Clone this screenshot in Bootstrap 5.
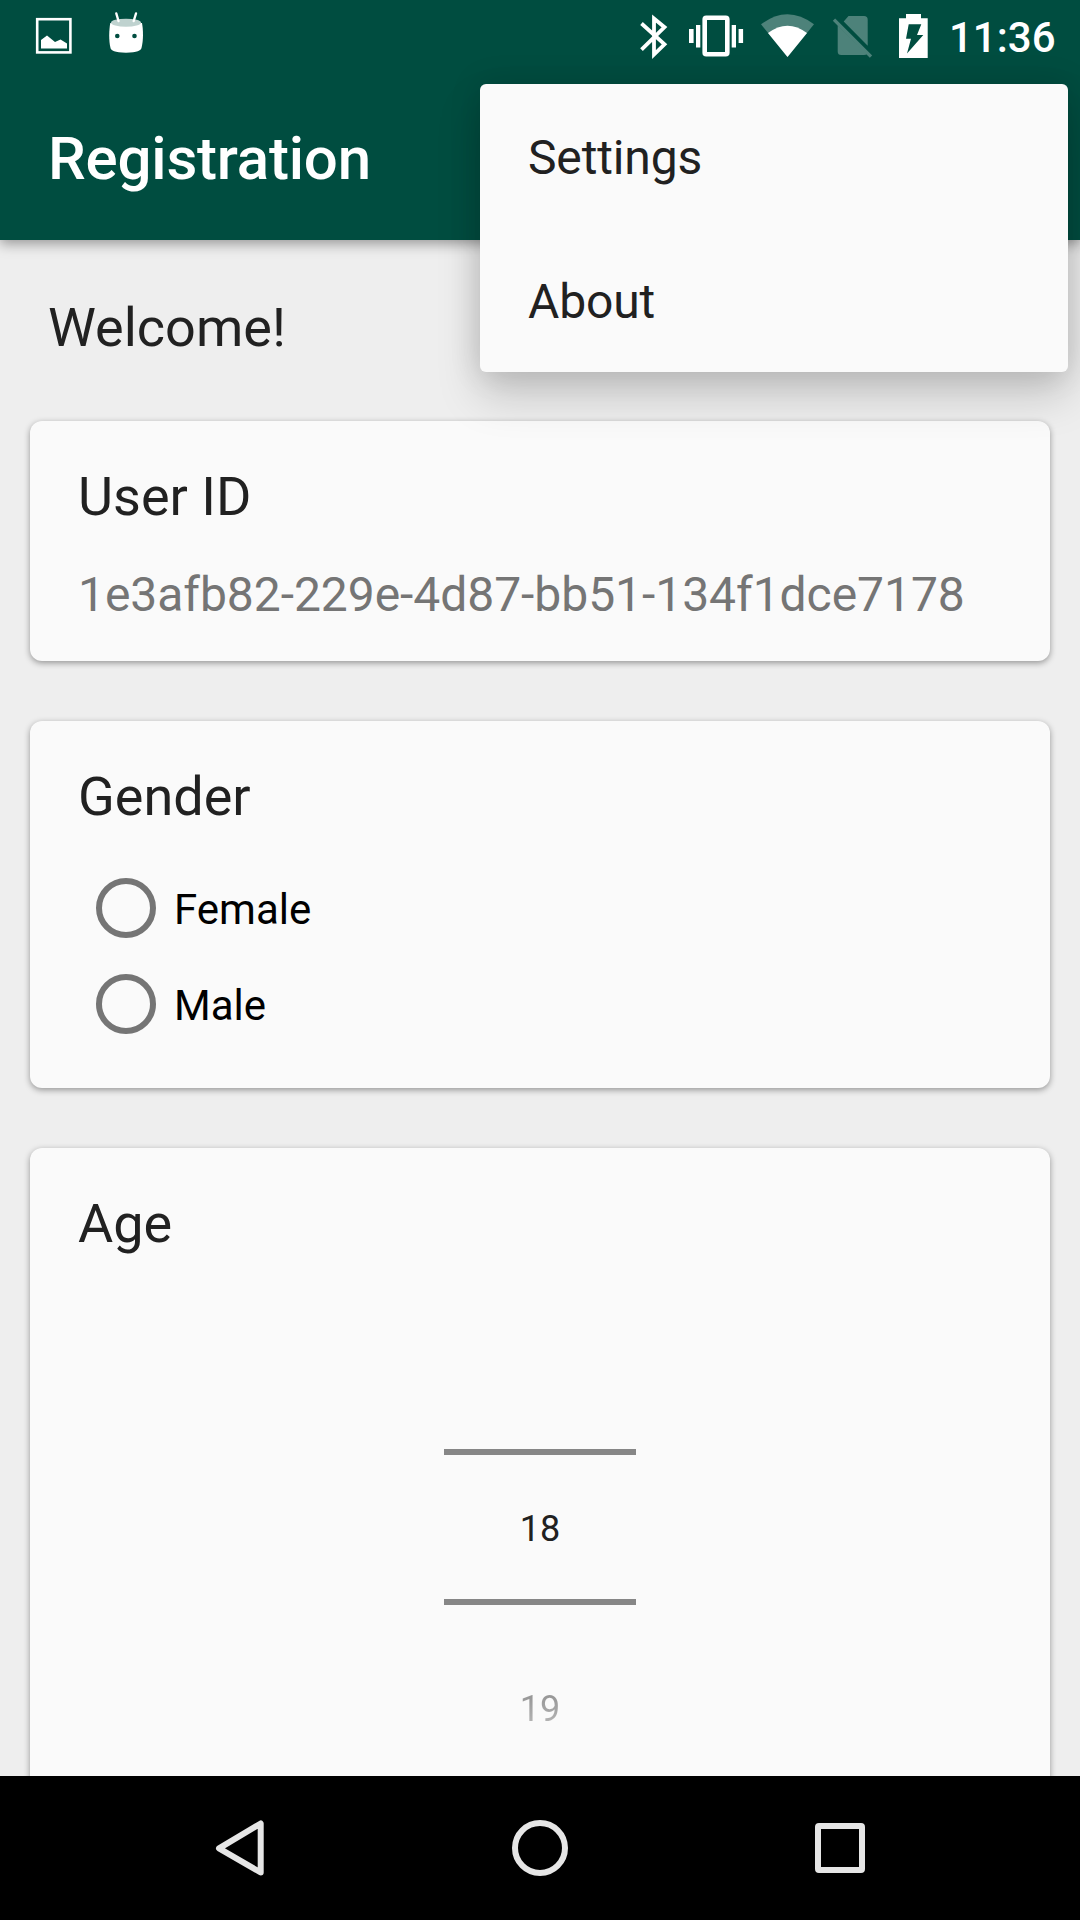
<!DOCTYPE html>
<html lang="en">
<head>
<meta charset="utf-8">
<meta name="viewport" content="width=device-width, initial-scale=1">
<title>Registration</title>
<link href="https://cdn.jsdelivr.net/npm/bootstrap@5.3.0/dist/css/bootstrap.min.css" rel="stylesheet">
<style>
body { font-family: Roboto, "Liberation Sans", sans-serif; background: #eee; color: #212121; height: 1920px; width: 1080px; }
.app-top { height: 240px; background: #004d40; color: #fff; box-shadow: 0 4px 12px rgba(0,0,0,.36); z-index: 2; }
.status-bar { height: 72px; }
.status-bar svg { display: block; flex: none; }
.clock { width: 138px; padding-left: 7px; padding-top: 2px; font-size: 42px; font-weight: 500; line-height: 72px; white-space: nowrap; }
.screen-title { font-size: 60px; font-weight: 500; line-height: 71px; letter-spacing: -.2px; padding: 51px 48px 0; margin: 0; }
.t-heading { font-size: 54px; font-weight: 400; line-height: 63px; margin: 0; color: #212121; }
.welcome { padding: 56px 48px 62px; }
.m-card { background: #fafafa; border: 0; border-radius: 12px; margin: 0 30px 60px; padding: 44px 48px 0; box-shadow: 0 2px 6px rgba(0,0,0,.38); }
.user-card { height: 240px; }
.gender-card { height: 367px; }
.age-card { height: 700px; margin-bottom: 0; }
.user-id { font-size: 48px; line-height: 56px; letter-spacing: -.05px; margin: 39px 0 0; color: #757575; white-space: nowrap; }
.choices { padding: 32px 0 0 18px; }
.choice { height: 96px; min-height: 0; margin: 0; padding: 0; color: #000; }
.choice .form-check-input { width: 60px; height: 60px; border: 6px solid #757575; background-color: transparent; float: none; margin: 0 18px 0 0; flex: none; }
.choice .form-check-label { font-size: 42px; line-height: 50px; padding-top: 3px; }
.picker { width: 192px; margin: 194px auto 0; font-size: 36px; text-align: center; }
.picked { height: 156px; border-top: 6px solid #868686; border-bottom: 6px solid #868686; line-height: 148px; }
.next-value { line-height: 43px; padding-top: 83px; background: linear-gradient(#969696 90px, #b8b8b8 122px); -webkit-background-clip: text; background-clip: text; color: transparent; }
.content-area { height: 1536px; }
.overflow-menu { left: 480px; top: 84px; width: 588px; height: 288px; background: #fafafa; border: 0; border-radius: 6px; padding: 0; box-shadow: 0 24px 44px rgba(0,0,0,.17), 0 0 32px rgba(0,0,0,.14); z-index: 5; }
.overflow-menu .dropdown-item { font-size: 48px; line-height: 147px; letter-spacing: -.15px; height: 144px; padding: 0 48px; color: #212121; }
.system-nav { height: 144px; background: #000; padding: 0 90px; z-index: 6; }
.system-nav svg { display: block; }
</style>
<script src="https://cdn.jsdelivr.net/npm/bootstrap@5.3.0/dist/js/bootstrap.bundle.min.js"></script>
</head>
<body class="position-relative overflow-hidden d-flex flex-column">
<header class="app-top position-relative flex-shrink-0">
  <div class="status-bar d-flex justify-content-between">
    <div class="d-flex">
      <svg width="90" height="72" viewBox="0 0 90 72"><rect x="37.200" y="19.200" width="33.200" height="33.200" fill="none" stroke="#fff" stroke-width="2.600"/><path d="M41 48.500V40l6-4.500 8 6.500 5.500-2.500 6.500 4v5z" fill="#fff"/></svg>
      <svg width="72" height="72" viewBox="90 0 72 72"><path d="M110.300 23C109 30 108.600 40 110.500 48c.6 2.500 4 4.700 15.500 4.700s14.700-2.200 15.500-4.700c2-8 1.800-18 .5-25z" fill="#fff"/><ellipse cx="126" cy="22.700" rx="15" ry="4" fill="#bfd2cf"/><path d="M116.300 13.500l2.200 7.500M136 13.500l-2.300 7.500" stroke="#fff" stroke-width="2.400" stroke-linecap="round"/><circle cx="117.300" cy="36" r="2.300" fill="#004d40"/><circle cx="134.500" cy="36" r="2.300" fill="#004d40"/></svg>
    </div>
    <div class="d-flex">
      <svg width="48" height="72" viewBox="630 0 48 72"><path d="M641.500 23.500l23 20.800-10.500 10.200V18.500l10.500 8.700-23 22.500" fill="none" stroke="#fff" stroke-width="3.800"/></svg>
      <svg width="72" height="72" viewBox="678 0 72 72" fill="#fff"><rect x="704.700" y="17.700" width="22.600" height="36.600" rx="1.500" fill="none" stroke="#fff" stroke-width="4.600"/><path d="M689 29h4.600v14H689zM696 25h4.300v22.500H696zM731.700 25h4.300v22.500h-4.300zM738.600 29h4.500v14h-4.500z"/></svg>
      <svg width="72" height="72" viewBox="750 0 72 72"><path d="M761 24.300Q787.500 4.200 814 24.300L787.500 57z" fill="#4d827a"/><path d="M768 33Q787.500 18.300 807 33L787.500 57z" fill="#fff"/></svg>
      <svg width="60" height="72" viewBox="822 0 60 72"><path d="M848.500 16H864q3.700 0 3.700 3.700V45.700L843.700 21.400zM837.700 25.200L867 54q-.8 1-3 1H841.200q-3.500 0-3.500-3.500z" fill="#4d827a"/><path d="M834 19.700l37 37" stroke="#4d827a" stroke-width="3.300"/></svg>
      <svg width="60" height="72" viewBox="882 0 60 72"><path d="M906 14h15v4.300h6.700V58H899V18.300h7z" fill="#fff"/><path d="M908.700 24.300h12.600L917 35h6.300L907 53.500l4-14.700h-5z" fill="#004d40"/></svg>
      <div class="clock">11:36</div>
    </div>
  </div>
  <h1 class="screen-title">Registration</h1>
</header>
<main class="content-area overflow-hidden flex-shrink-0">
  <h2 class="t-heading welcome">Welcome!</h2>
  <section class="card m-card user-card">
    <h3 class="t-heading">User ID</h3>
    <p class="user-id">1e3afb82-229e-4d87-bb51-134f1dce7178</p>
  </section>
  <section class="card m-card gender-card">
    <h3 class="t-heading">Gender</h3>
    <div class="choices">
      <div class="form-check choice d-flex align-items-center"><input class="form-check-input" type="radio" name="gender" id="female"><label class="form-check-label" for="female">Female</label></div>
      <div class="form-check choice d-flex align-items-center"><input class="form-check-input" type="radio" name="gender" id="male"><label class="form-check-label" for="male">Male</label></div>
    </div>
  </section>
  <section class="card m-card age-card">
    <h3 class="t-heading">Age</h3>
    <div class="picker">
      <div class="picked">18</div>
      <div class="next-value">19</div>
    </div>
  </section>
</main>
<nav class="system-nav position-relative d-flex justify-content-between flex-shrink-0">
  <svg width="300" height="144" viewBox="90 1776 300 144"><path d="M219 1848.300L260.700 1823.500V1872.500z" fill="none" stroke="#e6e6e6" stroke-width="6" stroke-linejoin="round"/></svg>
  <svg width="300" height="144" viewBox="390 1776 300 144"><circle cx="540" cy="1848" r="25" fill="none" stroke="#e6e6e6" stroke-width="6"/></svg>
  <svg width="300" height="144" viewBox="690 1776 300 144"><path fill-rule="evenodd" d="M819 1823h42q4 0 4 4v42q0 4-4 4h-42q-4 0-4-4v-42q0-4 4-4zm2 6v38h38v-38z" fill="#e6e6e6"/></svg>
</nav>
<div class="dropdown-menu show overflow-menu position-absolute">
  <a class="dropdown-item" href="#">Settings</a>
  <a class="dropdown-item" href="#">About</a>
</div>
</body>
</html>
